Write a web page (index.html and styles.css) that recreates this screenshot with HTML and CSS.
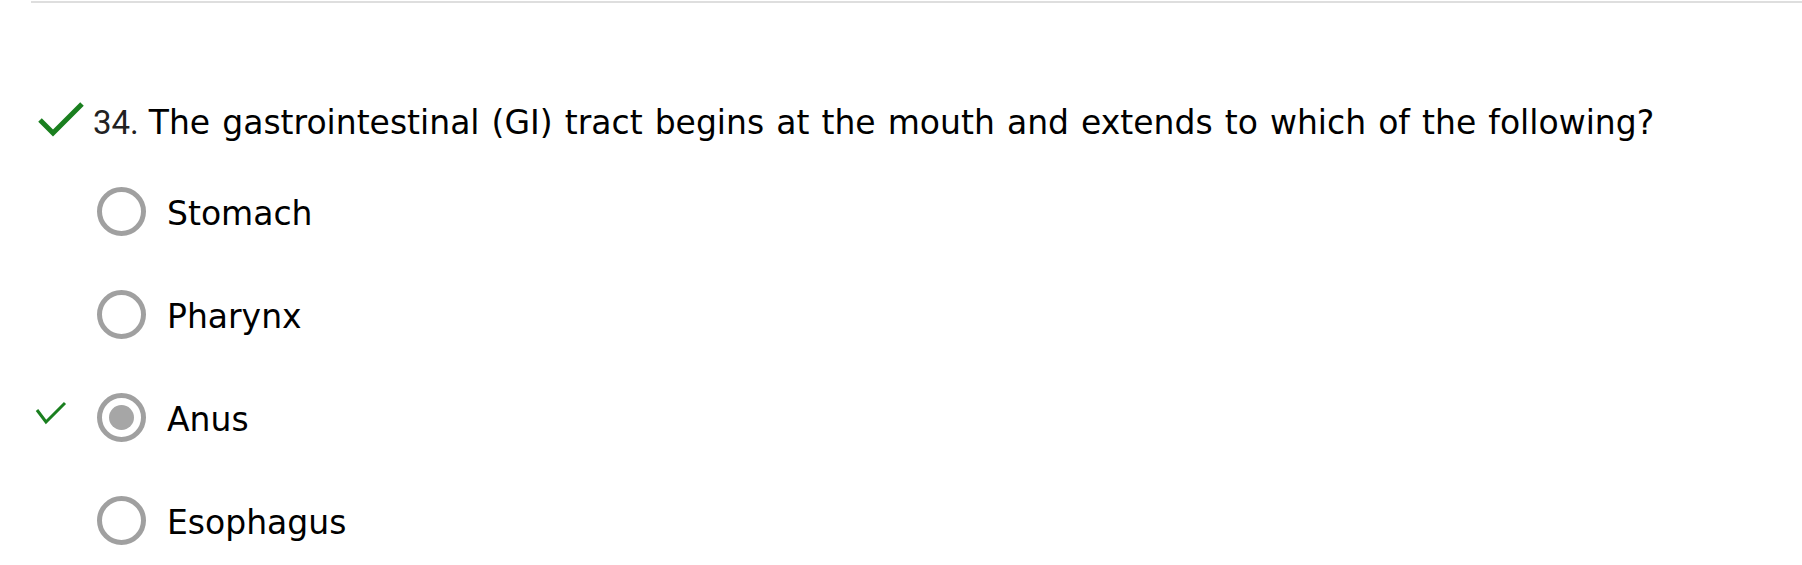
FILE: index.html
```html
<!DOCTYPE html>
<html>
<head>
<meta charset="utf-8">
<link rel="stylesheet" href="styles.css">
</head>
<body>
<div class="rule"></div>
<div class="question">
  <svg class="qcheck" width="46" height="36" viewBox="0 0 46 36"><polyline points="2,19 15,32 44,3" fill="none" stroke="#1a7f1f" stroke-width="5"/></svg>
  <span class="qnum">34.</span>
  <span class="qtext">The gastrointestinal (GI) tract begins at the mouth and extends to which of the following?</span>
</div>
<div class="options">
  <div class="option">
    <span class="marker"></span>
    <span class="radio"></span>
    <span class="label">Stomach</span>
  </div>
  <div class="option">
    <span class="marker"></span>
    <span class="radio"></span>
    <span class="label">Pharynx</span>
  </div>
  <div class="option">
    <span class="marker"><svg class="scheck" width="32" height="26" viewBox="0 0 32 26"><polyline points="2,9 11,21 30,2" fill="none" stroke="#1a7f1f" stroke-width="3"/></svg></span>
    <span class="radio checked"></span>
    <span class="label">Anus</span>
  </div>
  <div class="option">
    <span class="marker"></span>
    <span class="radio"></span>
    <span class="label">Esophagus</span>
  </div>
</div>
</body>
</html>
```
FILE: styles.css
```css
html, body {
  margin: 0;
  padding: 0;
  background: #fff;
  overflow: hidden;
}
body {
  font-family: "DejaVu Sans", Verdana, sans-serif;
  font-size: 33px;
  line-height: 40px;
  color: #000;
}
.rule {
  margin: 1px 0 0 31px;
  height: 2px;
  background: #dedede;
}
.question {
  display: flex;
  align-items: flex-start;
  margin-top: 100px;
  padding-left: 38px;
  white-space: nowrap;
}
.qcheck {
  display: block;
  margin-top: -2px;
  margin-right: 9px;
  flex: none;
}
.qnum {
  font-family: Roboto, "Liberation Sans", sans-serif;
  color: #222;
  margin-right: 10px;
}
.qtext {
  word-spacing: 1.6px;
}
.options {
  margin-top: 17px;
}
.option {
  display: grid;
  grid-template-columns: 97px 49px auto;
  align-items: center;
  height: 103px;
}
.marker {
  display: flex;
  justify-content: flex-start;
  padding-left: 35px;
}
.scheck {
  display: block;
  margin-top: -8px;
}
.radio {
  box-sizing: border-box;
  width: 49px;
  height: 49px;
  border: 5px solid #a0a0a0;
  border-radius: 50%;
  display: flex;
  align-items: center;
  justify-content: center;
}
.radio.checked::after {
  content: "";
  width: 25px;
  height: 25px;
  border-radius: 50%;
  background: #a6a6a6;
}
.label {
  margin-left: 21px;
  position: relative;
  top: 2px;
}
```
